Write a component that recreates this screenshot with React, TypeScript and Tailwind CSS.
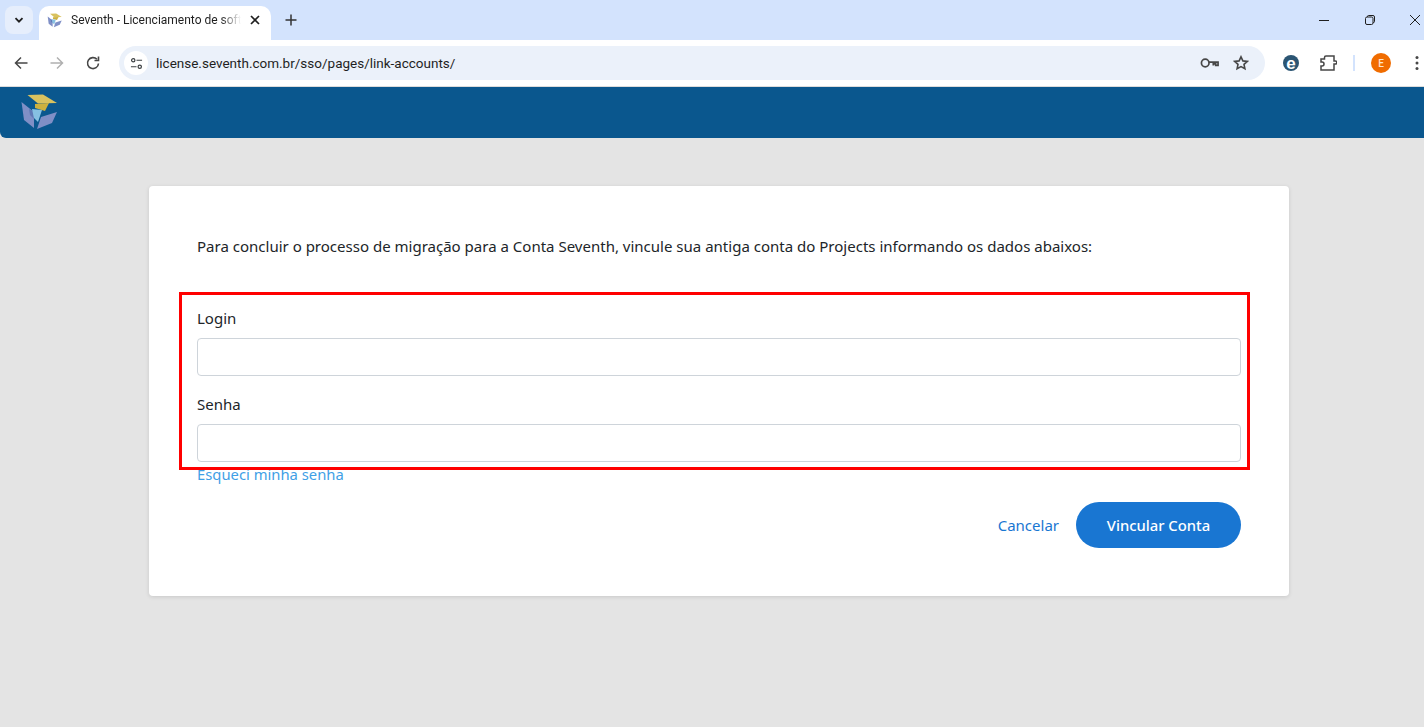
import React from "react";

function Logo({ className }: { className: string }) {
  return (
    <svg viewBox="5 3 40 38" className={className}>
      <polygon points="12.500,5 28,4.500 42,13 23,13.500" fill="#d9c25f" />
      <polygon points="20,14 34,13 30,21 20,18" fill="#cdb13f" />
      <polygon points="6.500,12 19,22 19,38 9,30" fill="#7f8fc6" />
      <polygon points="14,19 18,21 19,29 15,25" fill="#5f79b6" />
      <polygon points="17,19 27,20 23,32 19,28" fill="#86c0e2" />
      <polygon points="26,27 42,22 37,33 22,39" fill="#7f8fc6" />
    </svg>
  );
}

function Field({ label, className }: { label: string; className: string }) {
  return (
    <div className={className}>
      <label className="block text-[15px] leading-[24px] text-[#212529]">{label}</label>
      <input type="text" className="mt-[8px] block h-[38px] w-full rounded-[4px] border border-[#ced4da] bg-white" />
    </div>
  );
}

export default function App() {
  return (
    <div className="relative flex h-[727px] w-[1424px] flex-col overflow-hidden bg-[#e4e4e4] font-['Noto_Sans','Open_Sans',sans-serif]">
      {/* Tab strip */}
      <div className="flex h-[40px] shrink-0 items-end bg-[#d3e3fd]">
        <div className="mb-[6px] ml-[5px] flex h-[28px] w-[28px] items-center justify-center rounded-[8px] bg-[#e6eefc]">
          <svg viewBox="0 0 12 12" className="h-[12px] w-[12px]" fill="none" stroke="#1f1f1f" strokeWidth="1.8">
            <path d="M2.500 4.200 6 7.700l3.500-3.500" />
          </svg>
        </div>
        <div className="ml-[6px] flex h-[34px] w-[232px] items-center rounded-t-[10px] bg-white pb-[6px] pl-[8px] pr-[10px]">
          <Logo className="h-[15px] w-[16px] shrink-0" />
          <span className="ml-[8px] w-[170px] overflow-hidden whitespace-nowrap font-['Roboto',sans-serif] text-[12px] leading-[16px] text-[#1f1f1f] [mask-image:linear-gradient(to_right,black_88%,transparent)]">
            Seventh - Licenciamento de software
          </span>
          <svg viewBox="0 0 12 12" className="ml-auto h-[12px] w-[12px]" fill="none" stroke="#1f1f1f" strokeWidth="1.7">
            <path d="M2 2l8 8M10 2l-8 8" />
          </svg>
        </div>
        <svg viewBox="0 0 14 14" className="mb-[13px] ml-[13px] h-[14px] w-[14px]" fill="none" stroke="#333" strokeWidth="1.500">
          <path d="M7 1.500v11M1.500 7h11" />
        </svg>
        <div className="ml-auto mb-[14px] flex items-center">
          <svg viewBox="0 0 12 12" className="h-[12px] w-[12px]" fill="none" stroke="#1f1f1f" strokeWidth="1">
            <path d="M1 6.500h10" />
          </svg>
          <svg viewBox="0 0 12 12" className="ml-[34px] h-[12px] w-[12px]" fill="none" stroke="#1f1f1f" strokeWidth="1">
            <rect x="1.500" y="3" width="7.500" height="7.500" rx="1.500" />
            <path d="M3.500 3V2.500a1 1 0 0 1 1-1H9a1.500 1.500 0 0 1 1.500 1.500V7.500a1 1 0 0 1-1 1H9" />
          </svg>
          <svg viewBox="0 0 12 12" className="ml-[33px] mr-[3px] h-[12px] w-[12px]" fill="none" stroke="#1f1f1f" strokeWidth="1">
            <path d="M1 1l10 10M11 1L1 11" />
          </svg>
        </div>
      </div>

      {/* Toolbar */}
      <div className="flex h-[46px] shrink-0 items-center bg-white pb-[6px] pt-[6px]">
        <svg viewBox="0 0 16 16" className="ml-[13px] h-[16px] w-[16px]" fill="none" stroke="#474747" strokeWidth="1.500">
          <path d="M14.500 8H2.500M8 2.500 2.500 8 8 13.500" />
        </svg>
        <svg viewBox="0 0 16 16" className="ml-[20px] h-[16px] w-[16px]" fill="none" stroke="#b0b0b0" strokeWidth="1.500">
          <path d="M1.500 8h12M8 2.500 13.500 8 8 13.500" />
        </svg>
        <svg viewBox="0 0 16 16" className="ml-[20px] h-[16px] w-[16px]" fill="none" stroke="#474747" strokeWidth="1.600">
          <path d="M13.500 8.500a5.500 5.500 0 1 1-1.500-4.200" />
          <path d="M13.500 1.500v4h-4" />
        </svg>
        <div className="ml-[18px] flex h-[34px] w-[1146px] items-center rounded-full bg-[#ebf1fa] pl-[5px] pr-[16px]">
          <div className="flex h-[24px] w-[24px] items-center justify-center rounded-full bg-white">
            <svg viewBox="0 0 14 14" className="h-[13px] w-[13px]" fill="none" stroke="#3c4043" strokeWidth="1.300">
              <circle cx="3.500" cy="3.500" r="1.800" />
              <path d="M7 3.500h6M1 10.500h6" />
              <circle cx="10.500" cy="10.500" r="1.800" />
            </svg>
          </div>
          <span className="ml-[8px] font-['Roboto',sans-serif] text-[13.500px] leading-[20px] text-[#1f1f1f]">
            license.seventh.com.br/sso/pages/link-accounts/
          </span>
          <svg viewBox="0 0 20 12" className="ml-auto h-[12px] w-[19px]" fill="none" stroke="#474747" strokeWidth="1.800">
            <circle cx="5.500" cy="6" r="4" />
            <path d="M9.500 5h9.500v3.500h-2.500V7H14v1.500" />
          </svg>
          <svg viewBox="0 0 16 16" className="ml-[14px] h-[16px] w-[16px]" fill="none" stroke="#474747" strokeWidth="1.600">
            <path d="M8 1.800l1.900 4.100 4.400.500-3.300 3 .9 4.400L8 11.600l-3.900 2.200.9-4.400-3.300-3 4.400-.5z" />
          </svg>
        </div>
        <div className="ml-[18px] flex h-[16px] w-[16px] items-center justify-center rounded-full bg-[#2b5573] font-['Liberation_Sans',sans-serif] text-[17px] font-bold leading-[15px] text-white">
          e
        </div>
        <svg viewBox="0 0 18 18" className="ml-[20px] h-[18px] w-[18px]" fill="none" stroke="#474747" strokeWidth="1.500">
          <path d="M2 5h3.500V3.500a1.500 1.500 0 0 1 1.500-1.500h8v5h1.300a1.500 1.500 0 0 1 0 3H15v6H2v-4h1a2 2 0 0 0 0-4H2z" />
        </svg>
        <div className="ml-[16px] h-[16px] w-[2px] bg-[#d3e3fd]" />
        <div className="ml-[16px] flex h-[20px] w-[20px] items-center justify-center rounded-full bg-[#f06c00] font-['Roboto',sans-serif] text-[10px] font-medium text-[#ffe3cc]">
          E
        </div>
        <svg viewBox="0 0 4 16" className="ml-[24px] h-[16px] w-[4px]" fill="#474747">
          <circle cx="2" cy="2.500" r="1.500" />
          <circle cx="2" cy="8" r="1.500" />
          <circle cx="2" cy="13.500" r="1.500" />
        </svg>
      </div>

      {/* Page */}
      <div className="h-[1px] shrink-0 bg-[#dcdcdc]" />
      <header className="flex h-[51px] shrink-0 items-start rounded-bl-[6px] bg-[#0a578e] pl-[20px] pt-[6px]">
        <Logo className="h-[38px] w-[40px]" />
      </header>

      <main className="ml-[149px] mt-[48px] h-[410px] w-[1140px] rounded-[4px] bg-white px-[48px] pt-[48px] shadow-[0_1px_4px_rgba(0,0,0,0.12)]">
        <p className="whitespace-nowrap text-[15.030px] leading-[24px] text-[#212529]">
          Para concluir o processo de migração para a Conta Seventh, vincule sua antiga conta do Projects informando os dados abaixos:
        </p>
        <Field label="Login" className="mt-[48px]" />
        <Field label="Senha" className="mt-[16px]" />
        <a className="mt-[1px] block text-[14.800px] leading-[22px] text-[#3f9fe6]">Esqueci minha senha</a>
        <div className="mt-[17px] flex items-center justify-end">
          <a className="text-[15px] leading-[22px] text-[#1976d2]">Cancelar</a>
          <button className="ml-[17px] h-[46px] w-[165px] rounded-full bg-[#1976d2] text-[14.800px] font-medium text-white">
            Vincular Conta
          </button>
        </div>
      </main>

      {/* Red highlight drawn over the screenshot */}
      <div className="pointer-events-none absolute left-[179px] top-[292px] h-[178px] w-[1071px] border-[3px] border-[#ff0000]" />
    </div>
  );
}
